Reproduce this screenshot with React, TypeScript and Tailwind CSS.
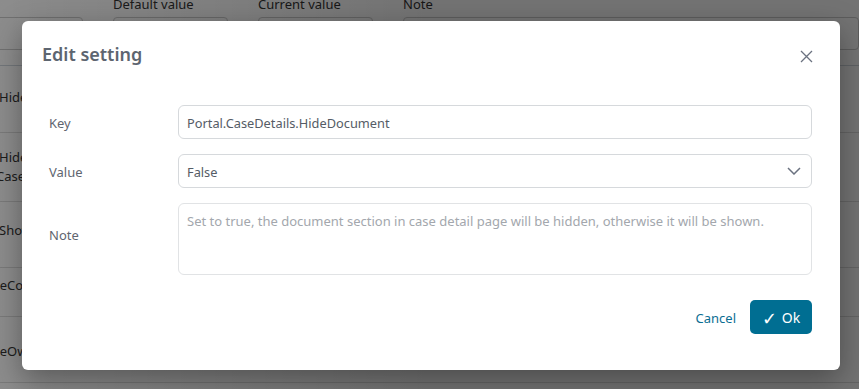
import React from "react";

const font = { fontFamily: '"Noto Sans", "Open Sans", Arial, sans-serif' };

const Background = () => (
  <div className="h-full w-full bg-white text-[13px] text-[#333]">
    {/* column titles, cut off by the top edge */}
    <div className="-mt-[8px] flex h-[25px] items-center">
      <div className="w-[113px]" />
      <div className="w-[145px]">Default value</div>
      <div className="w-[145px]">Current value</div>
      <div>Note</div>
    </div>
    {/* filter inputs */}
    <div className="flex h-[49px] items-start gap-[30px] border-b border-[#d0d7de]">
      <div className="-ml-[20px] h-[33px] w-[103px] rounded border border-[#ccc]" />
      <div className="h-[33px] w-[115px] rounded border border-[#ccc]" />
      <div className="h-[33px] w-[115px] rounded border border-[#ccc]" />
      <div className="h-[33px] flex-1 rounded border border-[#ccc]" />
    </div>
    <div className="flex h-[67px] items-center border-b border-[#ddd] pb-[2px]">
      <span className="-ml-[1px]">HideDocument</span>
    </div>
    <div className="flex h-[69px] flex-col justify-center border-b border-[#ddd] leading-[19px]">
      <span className="-ml-[1px]">Hide</span>
      <span className="-ml-[4px]">Case</span>
    </div>
    <div className="flex h-[66px] items-center border-b border-[#ddd] pb-[8px]">
      <span className="-ml-[1px]">Show</span>
    </div>
    <div className="flex h-[49px] items-start border-b border-[#ddd] pt-[8px]">
      <span className="-ml-[22px]">CaseCo</span>
    </div>
    <div className="flex h-[66px] items-center border-b border-[#ddd] pt-[4px]">
      <span className="-ml-[22px]">CaseOw</span>
    </div>
  </div>
);

export default function App() {
  return (
    <div className="relative h-[389px] w-[859px] overflow-hidden" style={font}>
      <Background />
      <div className="absolute inset-0 bg-gradient-to-r from-black/45 via-black/55 to-black/55" />

      {/* Dialog */}
      <div className="absolute left-[22px] top-[21px] flex h-[349px] w-[818px] flex-col rounded-[6px] bg-white shadow-[0_10px_30px_rgba(0,0,0,0.35)]">
        <div className="flex h-[70px] items-center justify-between pb-[4px] pl-[20px] pr-[27px]">
          <h2 className="text-[18px] font-semibold text-[#5d6570]">Edit setting</h2>
          <button className="mt-[4px] text-[#6b7280]">
            <svg width="13" height="13" viewBox="0 0 13 13" fill="none" stroke="currentColor" strokeWidth="1.3">
              <path d="M1 1l11 11M12 1L1 12" />
            </svg>
          </button>
        </div>

        <div className="flex flex-col gap-[15px] pl-[27px] pr-[28px] pt-[14px] text-[13px]">
          <div className="flex items-center">
            <label className="w-[129px] pt-[3px] text-[#5f6670]">Key</label>
            <div className="flex h-[34px] flex-1 items-center rounded-[6px] border border-[#d6d9dc] px-[8px] pt-[3px] text-[12.8px] text-[#555c66]">
              Portal.CaseDetails.HideDocument
            </div>
          </div>
          <div className="flex items-center">
            <label className="w-[129px] pt-[3px] text-[#5f6670]">Value</label>
            <div className="flex h-[34px] flex-1 items-center justify-between rounded-[6px] border border-[#d6d9dc] pl-[8px] pr-[10px] text-[#555c66]">
              <span className="pt-[3px] text-[12.8px]">False</span>
              <svg width="14" height="8" viewBox="0 0 14 8" fill="none" stroke="#6b7280" strokeWidth="1.5">
                <path d="M1 1l6 6 6-6" />
              </svg>
            </div>
          </div>
          <div className="flex items-start">
            <label className="mt-[23px] w-[129px] text-[#5f6670]">Note</label>
            <div className="h-[72px] flex-1 rounded-[6px] border border-[#e1e3e5] px-[8px] pt-[8px] text-[13px] text-[#a3a7ad]">
              Set to true, the document section in case detail page will be hidden, otherwise it will be shown.
            </div>
          </div>
        </div>

        <div className="mt-[25px] flex items-center justify-end gap-[14px] pr-[28px]">
          <button className="pt-[3px] text-[13px] text-[#0b6e93]">Cancel</button>
          <button className="flex h-[34px] w-[62px] items-center justify-center gap-[5px] rounded-[5px] bg-[#006e92] pt-[1px] text-[14px] text-white">
            <span className="text-[18px] font-light leading-none">✓</span>
            <span>Ok</span>
          </button>
        </div>
      </div>
    </div>
  );
}
